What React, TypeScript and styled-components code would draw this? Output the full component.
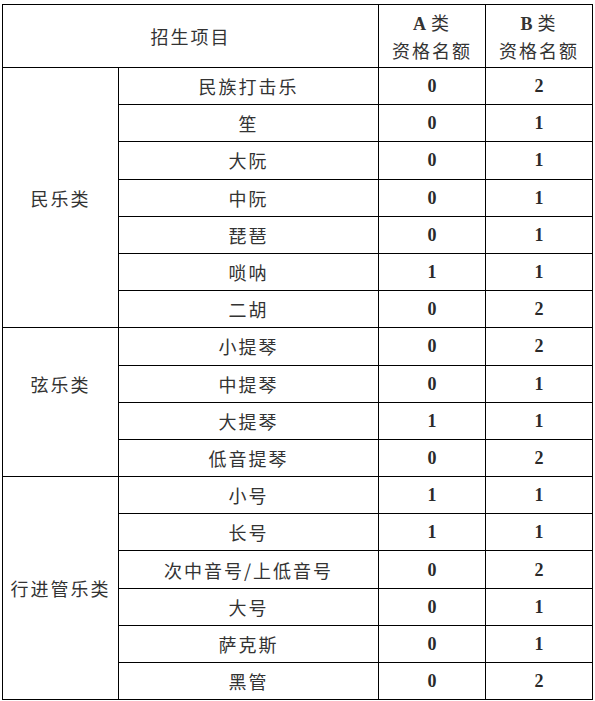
import styled, { createGlobalStyle } from 'styled-components';

const GlobalStyle = createGlobalStyle`
  html, body {
    margin: 0;
    padding: 0;
    background: #fff;
  }
`;

const Page = styled.div`
  padding: 4px 0 0 2px;
`;

const Table = styled.table`
  width: 591px;
  border-collapse: collapse;
  table-layout: fixed;
  font-family: "Noto Sans CJK SC", sans-serif;
  font-size: 18px;
  color: #333;
`;

const Cell = styled.td`
  border: 1px solid #000;
  text-align: center;
  vertical-align: middle;
  padding: 0;
  letter-spacing: 2px;
  line-height: 26px;
`;

const HeadCell = styled(Cell)`
  height: 62px;
`;

const GroupCell = styled(Cell)<{ $lift?: number }>`
  padding-bottom: ${(p) => p.$lift ?? 0}px;
`;

const ItemCell = styled(Cell)`
  height: 36.2px;
`;

const Num = styled(Cell)`
  font-family: "Liberation Serif", serif;
  font-weight: bold;
  font-size: 18px;
  color: #2a2a2a;
  letter-spacing: 0;
`;

const Latin = styled.span`
  font-family: "Liberation Serif", serif;
  font-weight: bold;
  letter-spacing: 0;
  margin-right: 5px;
`;

type Item = { name: string; a: number; b: number };
type Group = { title: string; lift?: number; items: Item[] };

const groups: Group[] = [
  {
    title: '民乐类',
    items: [
      { name: '民族打击乐', a: 0, b: 2 },
      { name: '笙', a: 0, b: 1 },
      { name: '大阮', a: 0, b: 1 },
      { name: '中阮', a: 0, b: 1 },
      { name: '琵琶', a: 0, b: 1 },
      { name: '唢呐', a: 1, b: 1 },
      { name: '二胡', a: 0, b: 2 },
    ],
  },
  {
    title: '弦乐类',
    lift: 37,
    items: [
      { name: '小提琴', a: 0, b: 2 },
      { name: '中提琴', a: 0, b: 1 },
      { name: '大提琴', a: 1, b: 1 },
      { name: '低音提琴', a: 0, b: 2 },
    ],
  },
  {
    title: '行进管乐类',
    items: [
      { name: '小号', a: 1, b: 1 },
      { name: '长号', a: 1, b: 1 },
      { name: '次中音号/上低音号', a: 0, b: 2 },
      { name: '大号', a: 0, b: 1 },
      { name: '萨克斯', a: 0, b: 1 },
      { name: '黑管', a: 0, b: 2 },
    ],
  },
];

export default function App() {
  return (
    <>
      <GlobalStyle />
      <Page>
        <Table>
          <colgroup>
            <col style={{ width: 116 }} />
            <col style={{ width: 260 }} />
            <col style={{ width: 107 }} />
            <col style={{ width: 107 }} />
          </colgroup>
          <tbody>
            <tr>
              <HeadCell colSpan={2}>招生项目</HeadCell>
              <HeadCell>
                <Latin>A</Latin>类<br />资格名额
              </HeadCell>
              <HeadCell>
                <Latin>B</Latin>类<br />资格名额
              </HeadCell>
            </tr>
            {groups.map((g) =>
              g.items.map((it, i) => (
                <tr key={g.title + it.name}>
                  {i === 0 && (
                    <GroupCell rowSpan={g.items.length} $lift={g.lift}>
                      {g.title}
                    </GroupCell>
                  )}
                  <ItemCell>{it.name}</ItemCell>
                  <Num>{it.a}</Num>
                  <Num>{it.b}</Num>
                </tr>
              ))
            )}
          </tbody>
        </Table>
      </Page>
    </>
  );
}
